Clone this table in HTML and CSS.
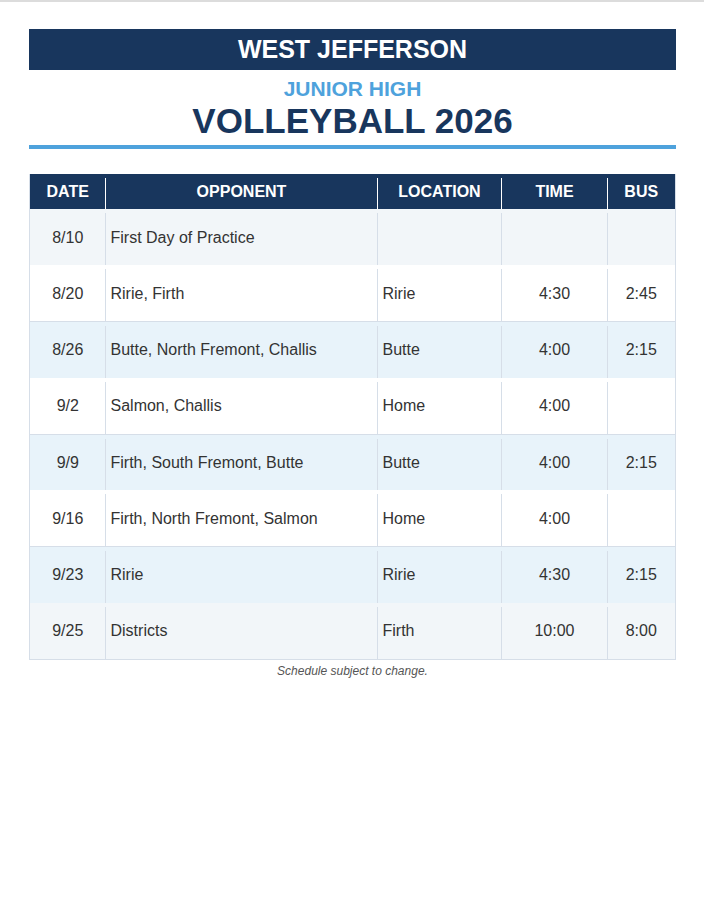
FILE: index.html
```html
<!DOCTYPE html>
<html lang="en">
<head>
<meta charset="utf-8">
<title>West Jefferson Junior High Volleyball 2026</title>
<link rel="stylesheet" href="styles.css">
</head>
<body>
<div class="page">
  <header class="masthead">
    <div class="school-bar">WEST JEFFERSON</div>
    <div class="level">JUNIOR HIGH</div>
    <h1 class="sport">VOLLEYBALL 2026</h1>
  </header>
  <table class="schedule">
    <colgroup>
      <col class="c-date"><col class="c-opp"><col class="c-loc"><col class="c-time"><col class="c-bus">
    </colgroup>
    <thead>
      <tr><th>DATE</th><th>OPPONENT</th><th>LOCATION</th><th>TIME</th><th>BUS</th></tr>
    </thead>
    <tbody>
      <tr class="grey"><td class="ctr">8/10</td><td>First Day of Practice</td><td></td><td class="ctr"></td><td class="ctr"></td></tr>
      <tr class="white"><td class="ctr">8/20</td><td>Ririe, Firth</td><td>Ririe</td><td class="ctr">4:30</td><td class="ctr">2:45</td></tr>
      <tr class="blue"><td class="ctr">8/26</td><td>Butte, North Fremont, Challis</td><td>Butte</td><td class="ctr">4:00</td><td class="ctr">2:15</td></tr>
      <tr class="white"><td class="ctr">9/2</td><td>Salmon, Challis</td><td>Home</td><td class="ctr">4:00</td><td class="ctr"></td></tr>
      <tr class="blue"><td class="ctr">9/9</td><td>Firth, South Fremont, Butte</td><td>Butte</td><td class="ctr">4:00</td><td class="ctr">2:15</td></tr>
      <tr class="white"><td class="ctr">9/16</td><td>Firth, North Fremont, Salmon</td><td>Home</td><td class="ctr">4:00</td><td class="ctr"></td></tr>
      <tr class="blue"><td class="ctr">9/23</td><td>Ririe</td><td>Ririe</td><td class="ctr">4:30</td><td class="ctr">2:15</td></tr>
      <tr class="grey"><td class="ctr">9/25</td><td>Districts</td><td>Firth</td><td class="ctr">10:00</td><td class="ctr">8:00</td></tr>
    </tbody>
  </table>
  <p class="note">Schedule subject to change.</p>
</div>
</body>
</html>
```

FILE: styles.css
```css
html, body {
  margin: 0;
  padding: 0;
  background: #ffffff;
}

body {
  border-top: 2px solid #dcdcdc;
  font-family: "Liberation Sans", Arial, sans-serif;
  color: #333333;
}

.page {
  padding: 27px 28px 0 29px;
}

.masthead {
  border-bottom: 4px solid #4ea2dc;
  padding-bottom: 4px;
  text-align: center;
}

.school-bar {
  background: #18365d;
  color: #ffffff;
  font-weight: bold;
  font-size: 25px;
  line-height: 41px;
  height: 41px;
}

.level {
  color: #4ea2dc;
  font-weight: bold;
  font-size: 21px;
  line-height: 24px;
  margin-top: 7px;
}

.sport {
  margin: 0;
  color: #18365d;
  font-weight: bold;
  font-size: 35px;
  line-height: 40px;
}

.schedule {
  margin-top: 25px;
  width: 646px;
  table-layout: fixed;
  border-collapse: collapse;
  border-left: 1px solid #d6dee8;
  border-right: 1px solid #d6dee8;
  border-bottom: 1px solid #d6dee8;
  font-size: 16px;
}

.c-date { width: 76px; }
.c-opp { width: 272px; }
.c-loc { width: 124px; }
.c-time { width: 106px; }
.c-bus { width: 68px; }

.schedule thead tr {
  background: #18365d;
  height: 35px;
}

.schedule th {
  color: #ffffff;
  font-weight: bold;
  font-size: 16px;
  text-align: center;
  padding: 1px 0 0 0;
  background-image: linear-gradient(#ffffff, #ffffff);
  background-size: 1px calc(100% - 4px);
  background-position: right bottom;
  background-repeat: no-repeat;
}

.schedule th:last-child {
  background-image: none;
}

.schedule tbody tr {
  height: 56.25px;
}

.schedule tr.grey { background: #f2f6f9; }
.schedule tr.white { background: #ffffff; border-bottom: 1px solid #d6dee8; }
.schedule tr.blue { background: #e8f3fa; }

.schedule td {
  padding: 1px 5px 0 5px;
  text-align: left;
  vertical-align: middle;
  white-space: nowrap;
  background-image: linear-gradient(#d6dee8, #d6dee8);
  background-size: 1px calc(100% - 4px);
  background-position: right bottom;
  background-repeat: no-repeat;
}

.schedule td:last-child {
  background-image: none;
}

.schedule td.ctr {
  text-align: center;
}

.note {
  margin: 4px 0 0 0;
  text-align: center;
  font-style: italic;
  font-size: 12px;
  color: #555555;
}
```
